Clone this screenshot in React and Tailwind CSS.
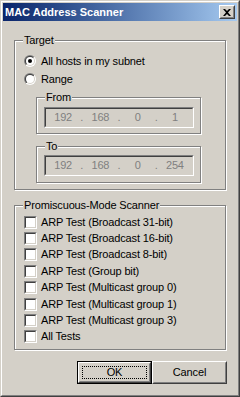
import React from "react";

const font = { fontFamily: '"Liberation Sans", Arial, sans-serif' };

function Radio({ checked }) {
  return (
    <svg width="12" height="12" viewBox="0 0 12 12" className="shrink-0">
      <defs>
        <linearGradient id="rOut" x1="0" y1="0" x2="1" y2="1">
          <stop offset="0.5" stopColor="#808080" />
          <stop offset="0.5" stopColor="#ffffff" />
        </linearGradient>
        <linearGradient id="rIn" x1="0" y1="0" x2="1" y2="1">
          <stop offset="0.5" stopColor="#404040" />
          <stop offset="0.5" stopColor="#d4d0c8" />
        </linearGradient>
      </defs>
      <circle cx="6" cy="6" r="6" fill="url(#rOut)" />
      <circle cx="6" cy="6" r="5" fill="url(#rIn)" />
      <circle cx="6" cy="6" r="4" fill="#ffffff" />
      {checked ? <circle cx="6" cy="6" r="2" fill="#000000" /> : null}
    </svg>
  );
}

function Check() {
  return (
    <div className="flex h-[13px] w-[13px] shrink-0 border border-t-[#808080] border-l-[#808080] border-r-white border-b-white">
      <div className="flex-1 border border-t-[#404040] border-l-[#404040] border-r-[#d4d0c8] border-b-[#d4d0c8] bg-white" />
    </div>
  );
}

function Group({ label, className, children }) {
  return (
    <div
      className={
        "relative border border-[#808080] shadow-[inset_1px_1px_0_#ffffff,1px_1px_0_#ffffff] " +
        className
      }
    >
      <span className="absolute -top-[8px] left-[8px] bg-[#d4d0c8] px-[1px] text-[11px] leading-[14px] text-black">
        {label}
      </span>
      {children}
    </div>
  );
}

function IpField({ parts }) {
  return (
    <div className="flex h-[21px] w-[150px] border border-t-[#808080] border-l-[#808080] border-r-white border-b-white">
      <div className="flex flex-1 items-center border border-t-[#404040] border-l-[#404040] border-r-[#d4d0c8] border-b-[#d4d0c8] bg-[#d4d0c8] text-[11px] text-[#808080]">
        {parts.map((p, i) => (
          <React.Fragment key={i}>
            {i > 0 ? <span className="w-[3px] text-center leading-[13px]">.</span> : null}
            <span className="flex-1 text-center leading-[13px]">{p}</span>
          </React.Fragment>
        ))}
      </div>
    </div>
  );
}

const tests = [
  "ARP Test (Broadcast 31-bit)",
  "ARP Test (Broadcast 16-bit)",
  "ARP Test (Broadcast 8-bit)",
  "ARP Test (Group bit)",
  "ARP Test (Multicast group 0)",
  "ARP Test (Multicast group 1)",
  "ARP Test (Multicast group 3)",
  "All Tests",
];

export default function App() {
  return (
    <div
      style={font}
      className="h-[397px] w-[240px] border border-t-[#d4d0c8] border-l-[#d4d0c8] border-r-[#404040] border-b-[#404040] bg-[#d4d0c8] text-[11px] tracking-[-0.15px] text-black"
    >
      <div className="flex h-full flex-col border border-t-white border-l-white border-r-[#808080] border-b-[#808080] p-px">
        {/* title bar */}
        <div className="flex h-[18px] shrink-0 items-center justify-between bg-gradient-to-r from-[#0a246a] to-[#a6caf0] pl-[2px] pr-[2px]">
          <span className="text-[11px] font-bold leading-[13px] tracking-normal text-white">MAC Address Scanner</span>
          <div className="flex h-[14px] w-[16px] border border-t-white border-l-white border-r-[#404040] border-b-[#404040] bg-[#d4d0c8]">
            <div className="flex flex-1 items-center justify-center border border-t-[#d4d0c8] border-l-[#d4d0c8] border-r-[#808080] border-b-[#808080]">
              <svg width="8" height="7" viewBox="0 0 8 7">
                <path d="M0 0h2l2 2 2-2h2L5 3.5 8 7H6L4 5 2 7H0l3-3.5z" fill="#000" />
              </svg>
            </div>
          </div>
        </div>

        <div className="flex flex-1 flex-col px-[11px] pt-[19px]">
          {/* Target */}
          <Group label="Target" className="h-[150px] pl-[9px] pt-[11px]">
            <div className="flex h-[18px] items-center gap-[5px]">
              <Radio checked />
              <span className="leading-[13px]">All hosts in my subnet</span>
            </div>
            <div className="flex h-[18px] items-center gap-[5px]">
              <Radio />
              <span className="leading-[13px]">Range</span>
            </div>
            <Group label="From" className="ml-[12px] mt-[9px] h-[37px] w-[165px] pl-[7px] pt-[9px]">
              <IpField parts={["192", "168", "0", "1"]} />
            </Group>
            <Group label="To" className="ml-[12px] mt-[12px] h-[37px] w-[165px] pl-[7px] pt-[8px]">
              <IpField parts={["192", "168", "0", "254"]} />
            </Group>
          </Group>

          {/* Promiscuous */}
          <Group label="Promiscuous-Mode Scanner" className="mt-[15px] h-[145px] pl-[9px] pt-[8px]">
            {tests.map((t) => (
              <div key={t} className="flex h-[16.4px] items-center gap-[4px]">
                <Check />
                <span className="leading-[13px]">{t}</span>
              </div>
            ))}
          </Group>

          <div className="-mr-[1px] mt-[11px] flex justify-end">
            <div className="flex h-[23px] w-[75px] border border-black">
              <div className="flex flex-1 border border-t-white border-l-white border-r-[#404040] border-b-[#404040]">
                <div className="flex flex-1 items-center justify-center border border-t-[#d4d0c8] border-l-[#d4d0c8] border-r-[#808080] border-b-[#808080] p-[2px]">
                  <div className="flex h-full w-full items-center justify-center border border-dotted border-black leading-[13px]">
                    OK
                  </div>
                </div>
              </div>
            </div>
            <div className="flex h-[23px] w-[75px] border border-t-white border-l-white border-r-[#404040] border-b-[#404040]">
              <div className="flex flex-1 items-center justify-center border border-t-[#d4d0c8] border-l-[#d4d0c8] border-r-[#808080] border-b-[#808080] leading-[13px]">
                Cancel
              </div>
            </div>
          </div>
        </div>
      </div>
    </div>
  );
}
